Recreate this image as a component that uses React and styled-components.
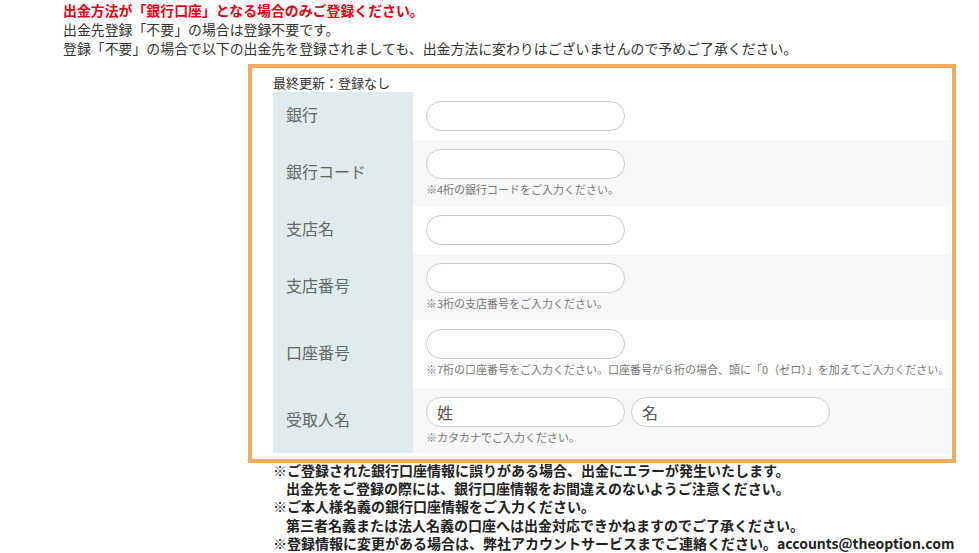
import styled, { createGlobalStyle } from "styled-components"

const Global = createGlobalStyle`
  html, body { margin: 0; padding: 0; background: #fff; }
  body { font-family: "Noto Sans CJK JP", "Noto Sans", sans-serif; color: #333; }
`;

const Page = styled.div`
  width: 979px;
  height: 553px;
  overflow: hidden;
  padding-top: 1px;
  box-sizing: border-box;
`;

const Intro = styled.div`
  margin-left: 63px;
  font-size: 13.9px;
  line-height: 19px;
  color: #333;
  white-space: nowrap;
`;

const Warn = styled.div`
  color: #e60012;
  font-weight: 700;
`;

const Box = styled.section`
  margin: 6px 0 0 248px;
  width: 708px;
  box-sizing: border-box;
  border: 4px solid #f6a861;
  padding: 5px 0 6px 21px;
`;

const Updated = styled.div`
  font-size: 13px;
  line-height: 19px;
  color: #333;
`;

const Table = styled.div`
  display: grid;
  grid-template-columns: 140px minmax(0, 1fr);
`;

const Label = styled.div`
  background: #dfebec;
  color: #666;
  font-size: 16px;
  display: flex;
  align-items: center;
  padding: 0 0 4px 13px;
  box-sizing: border-box;
  height: ${p => p.h}px;
`;

const Value = styled.div`
  background: ${p => (p.alt ? "#f7f7f7" : "#fff")};
  padding: 9px 0 0 13px;
  height: ${p => p.h}px;
  box-sizing: border-box;
  white-space: nowrap;
  overflow: hidden;
`;

const Inputs = styled.div`
  display: flex;
  gap: 6px;
`;

const Field = styled.input`
  width: 199px;
  height: 30px;
  box-sizing: border-box;
  border: 1px solid #cccccc;
  border-radius: 15px;
  background: #fff;
  padding: 0 10px;
  font-family: "Noto Sans CJK JP", sans-serif;
  font-size: 16px;
  color: #444;
  outline: none;
  &::placeholder { color: #555; }
`;

const Note = styled.div`
  font-size: 11px;
  line-height: 18px;
  color: #777;
  margin-top: 1px;
`;

const Footer = styled.div`
  margin: -2px 0 0 273px;
  font-size: 14px;
  line-height: 18.2px;
  font-weight: 700;
  color: #222;
  white-space: nowrap;
`;

const Indent = styled.div`
  padding-left: 13px;
`;

const rows = [
  { label: "銀行", h: 48 },
  { label: "銀行コード", h: 66, note: "※4桁の銀行コードをご入力ください。" },
  { label: "支店名", h: 48 },
  { label: "支店番号", h: 66, note: "※3桁の支店番号をご入力ください。" },
  { label: "口座番号", h: 68, note: "※7桁の口座番号をご入力ください。口座番号が６桁の場合、頭に「0（ゼロ）」を加えてご入力ください。" },
  { label: "受取人名", h: 65, note: "※カタカナでご入力ください。", names: true },
];

export default function App() {
  return (
    <Page>
      <Global />
      <Intro>
        <Warn>出金方法が「銀行口座」となる場合のみご登録ください。</Warn>
        <div>出金先登録「不要」の場合は登録不要です。</div>
        <div>登録「不要」の場合で以下の出金先を登録されましても、出金方法に変わりはございませんので予めご了承ください。</div>
      </Intro>
      <Box>
        <Updated>最終更新：登録なし</Updated>
        <Table>
          {rows.map((r, i) => [
            <Label key={r.label + "l"} h={r.h}>{r.label}</Label>,
            <Value key={r.label + "v"} h={r.h} alt={i % 2 === 1}>
              <Inputs>
                {r.names ? (
                  <>
                    <Field placeholder="姓" />
                    <Field placeholder="名" />
                  </>
                ) : (
                  <Field />
                )}
              </Inputs>
              {r.note && <Note>{r.note}</Note>}
            </Value>,
          ])}
        </Table>
      </Box>
      <Footer>
        <div>※ご登録された銀行口座情報に誤りがある場合、出金にエラーが発生いたします。</div>
        <Indent>出金先をご登録の際には、銀行口座情報をお間違えのないようご注意ください。</Indent>
        <div>※ご本人様名義の銀行口座情報をご入力ください。</div>
        <Indent>第三者名義または法人名義の口座へは出金対応できかねますのでご了承ください。</Indent>
        <div>※登録情報に変更がある場合は、弊社アカウントサービスまでご連絡ください。accounts@theoption.com</div>
      </Footer>
    </Page>
  );
}
